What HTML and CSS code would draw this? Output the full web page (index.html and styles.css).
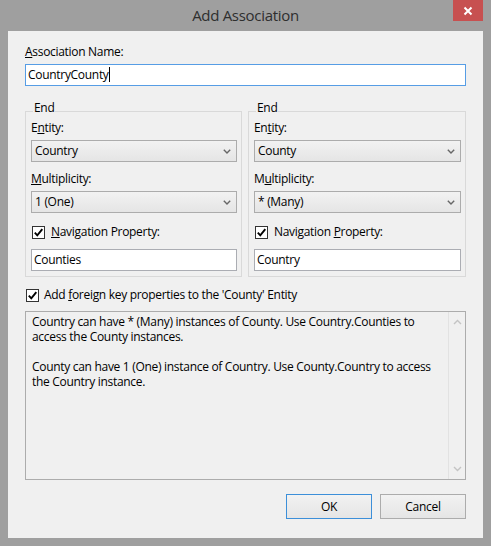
FILE: index.html
```html
<!DOCTYPE html>
<html>
<head>
<meta charset="utf-8">
<link rel="stylesheet" href="styles.css">
</head>
<body>
<div class="window">
  <div class="titlebar">
    <span></span>
    <span class="title">Add Association</span>
    <div class="close">
      <svg width="10" height="10" viewBox="0 0 10 10"><path d="M1.5 1.5 L8.5 8.5 M8.5 1.5 L1.5 8.5" stroke="#fff" stroke-width="2" fill="none"/></svg>
    </div>
  </div>
  <div class="client">
    <div class="label"><u>A</u>ssociation Name:</div>
    <div class="textbox focused">CountryCounty<span class="caret"></span></div>
    <div class="ends">
      <div class="group">
        <div class="legend">End</div>
        <div class="label first">E<u>n</u>tity:</div>
        <div class="combo"><span>Country</span><svg class="chev" width="8" height="5" viewBox="0 0 8 5"><path d="M0.8 0.8 L4 4 L7.2 0.8" stroke="#666" stroke-width="1.4" fill="none"/></svg></div>
        <div class="label next"><u>M</u>ultiplicity:</div>
        <div class="combo"><span>1 (One)</span><svg class="chev" width="8" height="5" viewBox="0 0 8 5"><path d="M0.8 0.8 L4 4 L7.2 0.8" stroke="#666" stroke-width="1.4" fill="none"/></svg></div>
        <div class="check-row nav">
          <span class="checkbox"><svg width="11" height="11" viewBox="0 0 11 11"><path d="M1.8 5.6 L4.3 8.3 L9.3 2.2" stroke="#000" stroke-width="1.9" fill="none"/></svg></span>
          <span><u>N</u>avigation Property:</span>
        </div>
        <div class="textbox navbox">Counties</div>
      </div>
      <div class="group">
        <div class="legend">End</div>
        <div class="label first">En<u>t</u>ity:</div>
        <div class="combo"><span>County</span><svg class="chev" width="8" height="5" viewBox="0 0 8 5"><path d="M0.8 0.8 L4 4 L7.2 0.8" stroke="#666" stroke-width="1.4" fill="none"/></svg></div>
        <div class="label next">M<u>u</u>ltiplicity:</div>
        <div class="combo"><span>* (Many)</span><svg class="chev" width="8" height="5" viewBox="0 0 8 5"><path d="M0.8 0.8 L4 4 L7.2 0.8" stroke="#666" stroke-width="1.4" fill="none"/></svg></div>
        <div class="check-row nav">
          <span class="checkbox"><svg width="11" height="11" viewBox="0 0 11 11"><path d="M1.8 5.6 L4.3 8.3 L9.3 2.2" stroke="#000" stroke-width="1.9" fill="none"/></svg></span>
          <span>Navigation <u>P</u>roperty:</span>
        </div>
        <div class="textbox navbox">Country</div>
      </div>
    </div>
    <div class="check-row fk">
      <span class="checkbox"><svg width="11" height="11" viewBox="0 0 11 11"><path d="M1.8 5.6 L4.3 8.3 L9.3 2.2" stroke="#000" stroke-width="1.9" fill="none"/></svg></span>
      <span>Add <u>f</u>oreign key properties to the 'County' Entity</span>
    </div>
    <div class="info">
      <div class="info-text">
        <p>Country can have * (Many) instances of County. Use Country.Counties to<br>access the County instances.</p>
        <p>County can have 1 (One) instance of Country. Use County.Country to access<br>the Country instance.</p>
      </div>
      <div class="scrollbar">
        <svg width="9" height="6" viewBox="0 0 9 6"><path d="M1 5 L4.5 1.5 L8 5" stroke="#c4c4c4" stroke-width="1.4" fill="none"/></svg>
        <svg width="9" height="6" viewBox="0 0 9 6"><path d="M1 1 L4.5 4.5 L8 1" stroke="#c4c4c4" stroke-width="1.4" fill="none"/></svg>
      </div>
    </div>
    <div class="buttons">
      <div class="btn default">OK</div>
      <div class="btn">Cancel</div>
    </div>
  </div>
</div>
</body>
</html>
```
FILE: styles.css
```css
* { box-sizing: border-box; }
body {
  margin: 0;
  font-family: "Open Sans", "Noto Sans", sans-serif;
  font-size: 12px;
  letter-spacing: -0.3px;
  color: #000;
}
.window {
  width: 491px;
  height: 546px;
  background: #9f9f9f;
  display: flex;
  flex-direction: column;
}
.titlebar {
  height: 31px;
  display: grid;
  grid-template-columns: 1fr auto 1fr;
  align-items: start;
}
.title {
  padding-top: 5px;
  font-size: 15px;
  line-height: 20px;
  color: #2e2e2e;
}
.close {
  justify-self: end;
  margin-right: 8px;
  width: 30px;
  height: 21px;
  background: #c75050;
  display: flex;
  align-items: center;
  justify-content: center;
}
.client {
  flex: 1;
  margin: 0 8px 8px;
  background: #f0f0f0;
  padding: 13px 17px 0;
  display: flex;
  flex-direction: column;
}
.label { line-height: 16px; }
.label.first { margin-top: 4px; }
.label.next { margin-top: 9px; }
.textbox {
  height: 22px;
  border: 1px solid #abadb3;
  background: #fff;
  padding-left: 2px;
  line-height: 20px;
  white-space: nowrap;
}
.textbox.focused {
  margin-top: 4px;
  border-color: #569de5;
}
.caret {
  display: inline-block;
  width: 1px;
  height: 15px;
  background: #000;
  vertical-align: -3px;
}
.ends {
  display: grid;
  grid-template-columns: 217px 218px;
  column-gap: 6px;
  margin-top: 25px;
}
.group {
  border: 1px solid #d9d9d9;
  padding: 0 4px 5px 5px;
  display: flex;
  flex-direction: column;
}
.legend {
  align-self: flex-start;
  margin: -12px 0 0 2px;
  padding: 0 1px;
  background: #f0f0f0;
  line-height: 16px;
}
.combo {
  margin-top: 4px;
  height: 22px;
  border: 1px solid #acacac;
  background: linear-gradient(#f2f2f2, #e5e5e5);
  padding: 0 5px 0 3px;
  line-height: 20px;
  display: flex;
  justify-content: space-between;
  align-items: center;
}
.check-row {
  display: flex;
  align-items: center;
  gap: 6px;
  line-height: 16px;
}
.check-row.nav { margin-top: 11px; }
.checkbox {
  width: 13px;
  height: 13px;
  margin-left: 1px;
  border: 1px solid #333;
  background: #fff;
  display: flex;
}
.navbox { margin-top: 9px; }
.check-row.fk {
  margin-top: 10px;
  gap: 5px;
}
.info {
  margin-top: 8px;
  height: 169px;
  border: 1px solid #acacac;
  background: #f0f0f0;
  display: flex;
}
.info-text {
  flex: 1;
  padding: 2px 6px;
  line-height: 15px;
}
.info-text p { margin: 0; }
.info-text p + p { margin-top: 15px; }
.scrollbar {
  width: 17px;
  border-left: 1px solid #e2e2e2;
  display: flex;
  flex-direction: column;
  justify-content: space-between;
  align-items: center;
  padding: 7px 0 7px;
}
.buttons {
  display: flex;
  justify-content: flex-end;
  gap: 8px;
  margin-top: 14px;
}
.btn {
  width: 86px;
  height: 25px;
  border: 1px solid #acacac;
  background: linear-gradient(#f2f2f2, #e5e5e5);
  text-align: center;
  line-height: 23px;
}
.btn.default { border-color: #3c8fd9; }
```
